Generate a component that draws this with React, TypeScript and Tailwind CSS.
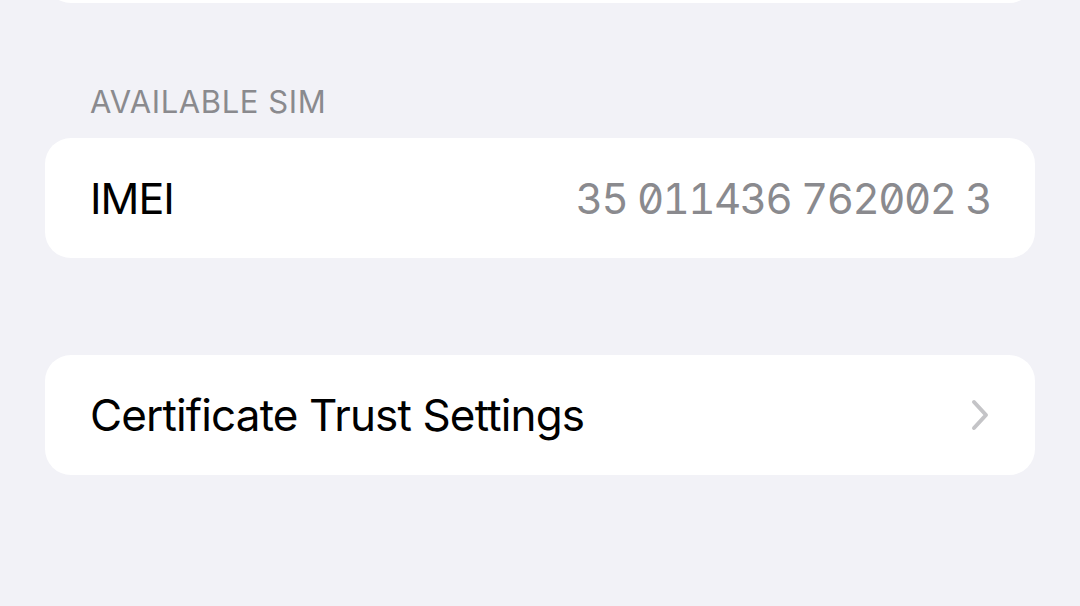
import React from "react";

export default function App() {
  return (
    <div
      className="w-[1080px] h-[606px] bg-[#f2f2f7] overflow-hidden flex flex-col"
      style={{ fontFamily: "Inter, 'Noto Sans', sans-serif" }}
    >
      <div className="mx-[45px] -mt-[57px] h-[60px] bg-white rounded-[26px] shrink-0" />
      <div className="px-[90px] pt-[81px] h-[135px] shrink-0 text-[31px] leading-[36px] text-[#8a8a8e] tracking-[0.6px]">
        AVAILABLE SIM
      </div>
      <div className="mx-[45px] h-[120px] bg-white rounded-[26px] flex items-center justify-between pl-[45px] pr-[44px] shrink-0">
        <span className="text-[43px] text-black tracking-[-1px]">IMEI</span>
        <span
          className="text-[42px] text-[#8a8a8e] tabular-nums tracking-[-1.5px]"
          style={{ fontFeatureSettings: '"tnum", "zero"' }}
        >
          35 011436 762002 3
        </span>
      </div>
      <div className="h-[97px] shrink-0" />
      <div className="mx-[45px] h-[120px] bg-white rounded-[26px] flex items-center justify-between pl-[45px] pr-[45px] shrink-0">
        <span className="text-[44px] text-black tracking-[-0.85px]">Certificate Trust Settings</span>
        <svg width="20" height="32" viewBox="0 0 20 32">
          <path d="M4 3 L16 16 L4 29" fill="none" stroke="#c4c4c7" strokeWidth="4" strokeLinecap="round" strokeLinejoin="round" />
        </svg>
      </div>
    </div>
  );
}
